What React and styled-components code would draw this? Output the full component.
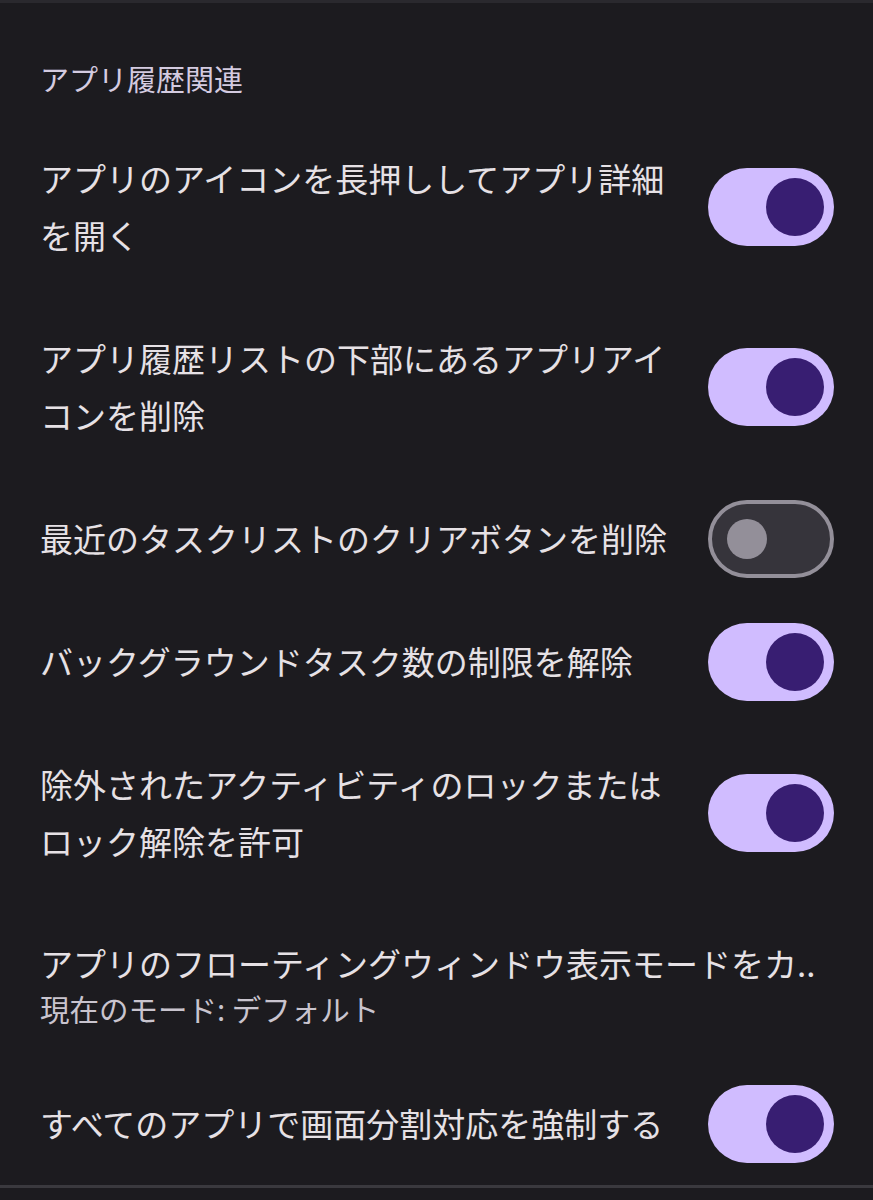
import React, { useState } from "react";
import styled, { createGlobalStyle } from "styled-components";

const GlobalStyle = createGlobalStyle`
  html, body {
    margin: 0;
    padding: 0;
    background: #1c1b1f;
  }
  body {
    font-family: "Noto Sans CJK JP", "Noto Sans", sans-serif;
    color: #e6e1e5;
  }
`;

const Page = styled.div`
  width: 873px;
  min-height: 1200px;
  background: #1c1b1f;
  border-top: 3px solid #2a292e;
  box-sizing: border-box;
`;

const List = styled.div`
  border-bottom: 3px solid #3a393e;
`;

const SectionTitle = styled.div`
  padding: 55px 40px 19px;
  font-size: 29px;
  line-height: 40px;
  color: #d4cbe0;
`;

const Row = styled.div`
  display: flex;
  align-items: center;
  gap: 28px;
  padding: 0 39px 0 40px;
`;

const TextBlock = styled.div`
  flex: 1;
  min-width: 0;
  padding: ${(p) => (p.$sub ? "36px 0 32px" : "33px 0")};
`;

const Title = styled.div`
  font-size: 33px;
  line-height: ${(p) => (p.$sub ? "48px" : "57px")};
  color: #e6e1e5;
  white-space: ${(p) => (p.$sub ? "nowrap" : "normal")};
`;

const Summary = styled.div`
  font-size: 29.5px;
  line-height: 43px;
  color: #c9c4ce;
`;

const Track = styled.button`
  flex: none;
  position: relative;
  width: 126px;
  height: 78px;
  border-radius: 39px;
  box-sizing: border-box;
  padding: 0;
  cursor: pointer;
  background: ${(p) => (p.$on ? "#d0bcff" : "#36343b")};
  border: ${(p) => (p.$on ? "none" : "4px solid #938f99")};
`;

const Thumb = styled.span`
  position: absolute;
  top: 50%;
  transform: translateY(-50%);
  border-radius: 50%;
  width: ${(p) => (p.$on ? "58px" : "40px")};
  height: ${(p) => (p.$on ? "58px" : "40px")};
  left: ${(p) => (p.$on ? "58px" : "15px")};
  background: ${(p) => (p.$on ? "#381e72" : "#938f99")};
`;

const Switch = ({ on, onToggle }) => (
  <Track $on={on} onClick={onToggle} aria-pressed={on}>
    <Thumb $on={on} />
  </Track>
);

const initial = [
  { id: 1, title: "アプリのアイコンを長押ししてアプリ詳細を開く", on: true },
  { id: 2, title: "アプリ履歴リストの下部にあるアプリアイコンを削除", on: true },
  { id: 3, title: "最近のタスクリストのクリアボタンを削除", on: false },
  { id: 4, title: "バックグラウンドタスク数の制限を解除", on: true },
  { id: 5, title: "除外されたアクティビティのロックまたはロック解除を許可", on: true },
  {
    id: 6,
    title: "アプリのフローティングウィンドウ表示モードをカ..",
    summary: "現在のモード: デフォルト",
  },
  { id: 7, title: "すべてのアプリで画面分割対応を強制する", on: true },
];

export default function App() {
  const [items, setItems] = useState(initial);

  const toggle = (id) =>
    setItems((list) =>
      list.map((it) => (it.id === id ? { ...it, on: !it.on } : it))
    );

  return (
    <Page>
      <GlobalStyle />
      <List>
        <SectionTitle>アプリ履歴関連</SectionTitle>
        {items.map((it) => (
          <Row key={it.id}>
            <TextBlock $sub={!!it.summary}>
              <Title $sub={!!it.summary}>{it.title}</Title>
              {it.summary && <Summary>{it.summary}</Summary>}
            </TextBlock>
            {!it.summary && (
              <Switch on={it.on} onToggle={() => toggle(it.id)} />
            )}
          </Row>
        ))}
      </List>
    </Page>
  );
}
